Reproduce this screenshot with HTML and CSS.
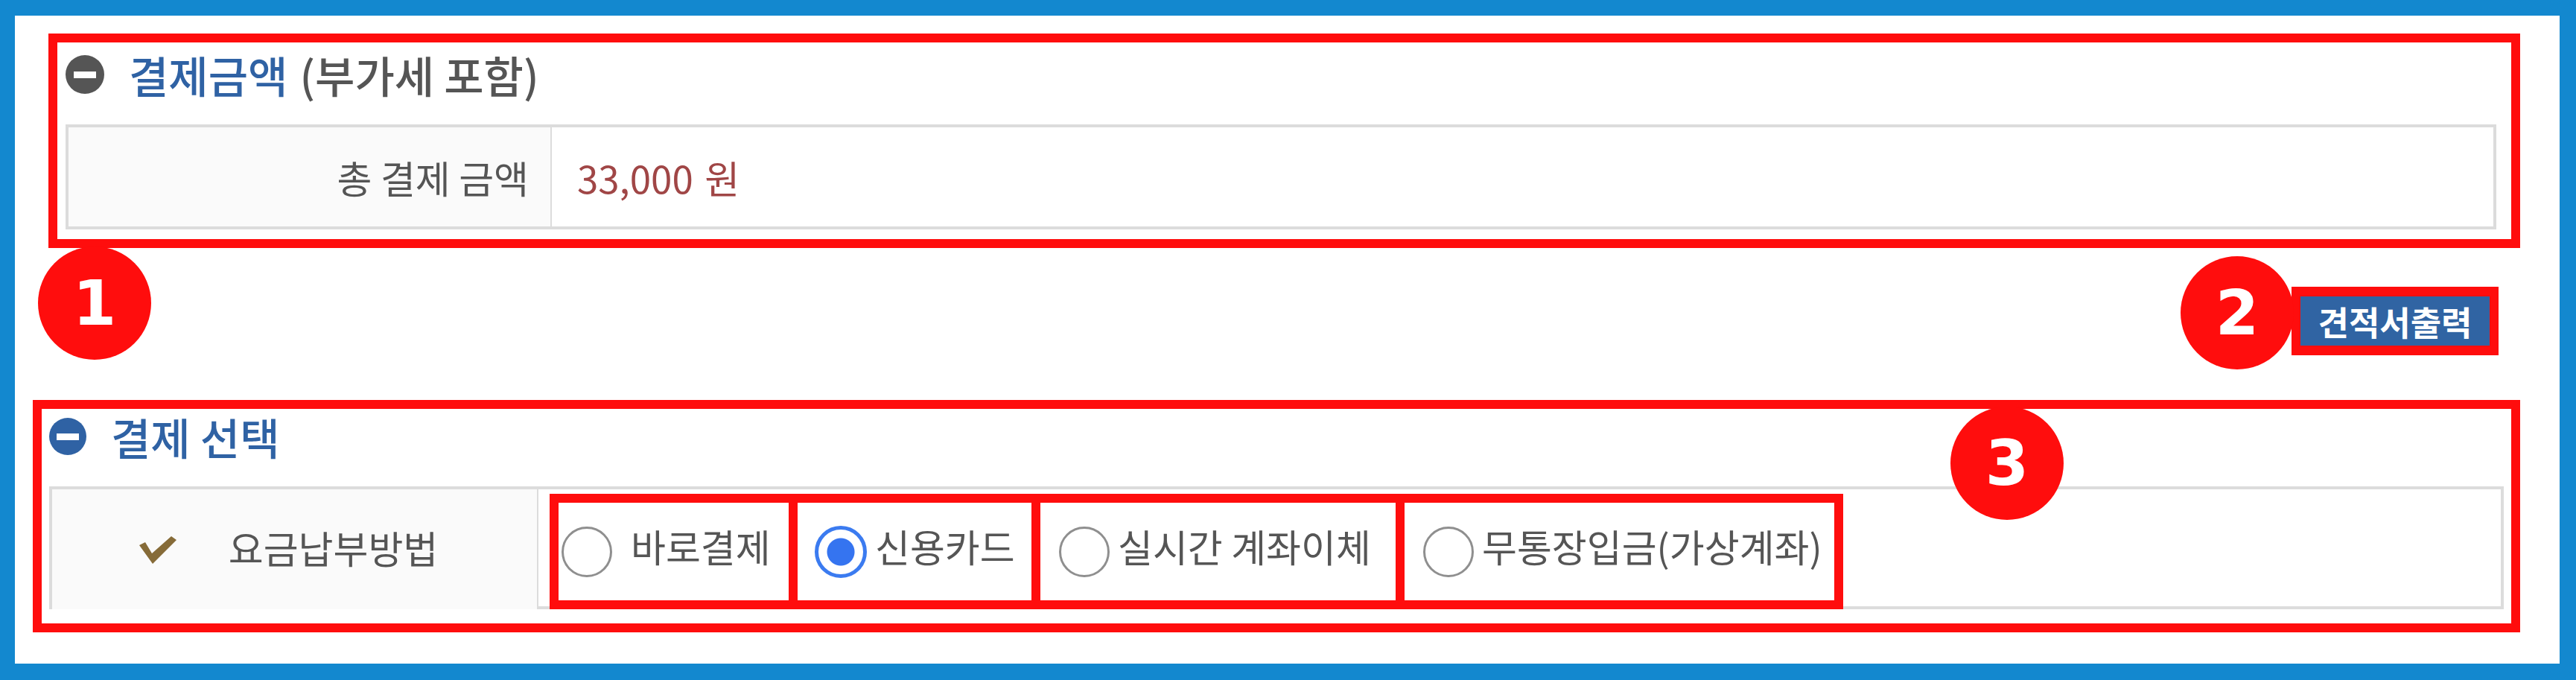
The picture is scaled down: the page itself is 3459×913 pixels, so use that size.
FILE: index.html
```html
<!DOCTYPE html>
<html>
<head>
    <title>결제 - 결제금액 및 결제 선택</title>
    <link rel="stylesheet" href="styles.css">
</head>
<body>
    <div class="frame">
        <div class="box box-amount">
            <h2 class="sec-title">
                <span class="sec-icon"></span>
                <span class="sec-name">결제금액</span>
                <span class="sec-note">(부가세 포함)</span>
            </h2>
            <div class="tbl tbl-amount">
                <div class="th">총 결제 금액</div>
                <div class="td price">33,000 원</div>
            </div>
        </div>

        <div class="mid">
            <button class="btn-quote">견적서출력</button>
        </div>

        <div class="box box-pay">
            <h2 class="sec-title">
                <span class="sec-icon"></span>
                <span class="sec-name">결제 선택</span>
            </h2>
            <div class="tbl tbl-pay">
                <div class="th th-pay">
                    <svg class="check" width="50" height="38" viewBox="0 0 50 38">
                        <path d="M0 13 L8 9 L17 24 L43 1 L50 6 L18 38 Z" fill="#866b38"/>
                    </svg>
                    <span>요금납부방법</span>
                </div>
                <div class="td">
                    <div class="opts">
                        <label class="opt opt-direct"><input type="radio" name="pay" class="radio"><span class="opt-text">바로결제</span></label>
                        <label class="opt opt-card"><input type="radio" name="pay" class="radio" checked><span class="opt-text">신용카드</span></label>
                        <label class="opt opt-bank"><input type="radio" name="pay" class="radio"><span class="opt-text">실시간 계좌이체</span></label>
                        <label class="opt opt-vbank"><input type="radio" name="pay" class="radio"><span class="opt-text">무통장입금(가상계좌)</span></label>
                    </div>
                </div>
            </div>
        </div>

        <span class="badge badge-1">1</span>
        <span class="badge badge-2">2</span>
        <span class="badge badge-3">3</span>
    </div>
</body>
</html>
```

FILE: styles.css
```css
body {
    margin: 0;
    background-color: #1388cf;
    font-family: "Noto Sans CJK KR", "Noto Sans", sans-serif;
    color: #555;
}

.frame {
    position: relative;
    margin: 21px 22px 22px 20px;
    height: 870px;
    background: white;
    padding-top: 24px;
    box-sizing: border-box;
}

/* red annotation boxes */
.box {
    border: 12px solid #ff0d0d;
    box-sizing: border-box;
    margin-right: 53px;
}

.box-amount {
    margin-left: 45px;
    height: 288px;
    padding: 8px 20px 13px 11px;
}

.box-pay {
    margin-left: 24px;
    height: 312px;
    padding: 2px 10px 19px 10px;
}

.sec-title {
    display: flex;
    align-items: center;
    height: 70px;
    margin: 0 0 32px 0;
    font-size: 58px;
    font-weight: 500;
    color: #2f62a4;
    white-space: pre;
}

.sec-icon {
    display: flex;
    align-items: center;
    justify-content: center;
    width: 52px;
    height: 52px;
    border-radius: 50%;
    background: #555;
    margin-right: 33px;
}

.sec-icon::after {
    content: "";
    width: 30px;
    height: 9px;
    background: white;
}

.box-pay .sec-icon {
    background: #2f62a4;
    width: 50px;
    height: 50px;
}

.sec-note {
    color: #555;
    margin-left: 16px;
}

/* tables */
.tbl {
    display: grid;
    border: 4px solid #dcdcdc;
    box-sizing: border-box;
    font-size: 51px;
    color: #555;
}

.tbl-amount {
    grid-template-columns: 649px 1fr;
    height: 141px;
}

.tbl-pay {
    grid-template-columns: 653px 1fr;
    height: 165px;
}

.th {
    background: #fafafa;
    border-right: 2px solid #dcdcdc;
    display: flex;
    align-items: center;
    justify-content: flex-end;
    padding-right: 29px;
    white-space: pre;
}

.td {
    display: flex;
    align-items: center;
    padding-left: 34px;
}

.price {
    color: #a04646;
    word-spacing: 4px;
}

.th-pay {
    justify-content: center;
    padding: 0 16px 0 0;
    gap: 70px;
}

.th-pay span {
    margin-bottom: 6px;
}

.tbl-pay .td {
    align-items: flex-start;
    padding: 6px 0 0 15px;
}

/* radio options with red outlines */
.opts {
    display: flex;
    height: 155px;
}

.opt {
    display: flex;
    align-items: center;
    height: 155px;
    box-sizing: border-box;
    border: 12px solid #ff0d0d;
    border-left: none;
    padding-left: 24px;
    white-space: pre;
}

.opt-direct {
    border-left: 12px solid #ff0d0d;
    width: 333px;
    padding-left: 4px;
}

.opt-card { width: 326px; padding-left: 23px; }
.opt-bank { width: 489px; padding-left: 25px; }
.opt-vbank { width: 589px; padding-left: 25px; }

.opt-text {
    margin-bottom: 16px;
    margin-left: 11px;
}

.opt-direct .opt-text {
    margin-left: 25px;
}

.radio {
    appearance: none;
    -webkit-appearance: none;
    margin: 0;
    width: 68px;
    height: 68px;
    border-radius: 50%;
    border: 3px solid #8f8f8f;
    background: white;
    box-sizing: border-box;
    flex-shrink: 0;
}

.radio:checked {
    width: 70px;
    height: 70px;
    border: 5px solid #3b7bf0;
    background: radial-gradient(circle, #3574f0 0 18px, white 19px);
}

/* button */
.mid {
    display: flex;
    justify-content: flex-end;
    align-items: flex-start;
    height: 204px;
    padding: 52px 82px 0 0;
    box-sizing: border-box;
}

.btn-quote {
    width: 278px;
    height: 92px;
    box-sizing: border-box;
    border: 12px solid #ff0d0d;
    border-top-width: 13px;
    border-bottom-width: 13px;
    background: #3064a3;
    color: white;
    font-family: "Noto Sans CJK KR", sans-serif;
    font-size: 45px;
    font-weight: bold;
    padding: 0;
    cursor: pointer;
}

/* numbered callouts */
.badge {
    position: absolute;
    display: flex;
    align-items: center;
    justify-content: center;
    width: 152px;
    height: 152px;
    border-radius: 50%;
    background: #ff0d0d;
    color: white;
    font-family: "DejaVu Sans", sans-serif;
    font-weight: bold;
    font-size: 84px;
}

.badge-1 { left: 31px; top: 310px; }
.badge-2 { left: 2908px; top: 323px; }
.badge-3 { left: 2599px; top: 525px; }
```
